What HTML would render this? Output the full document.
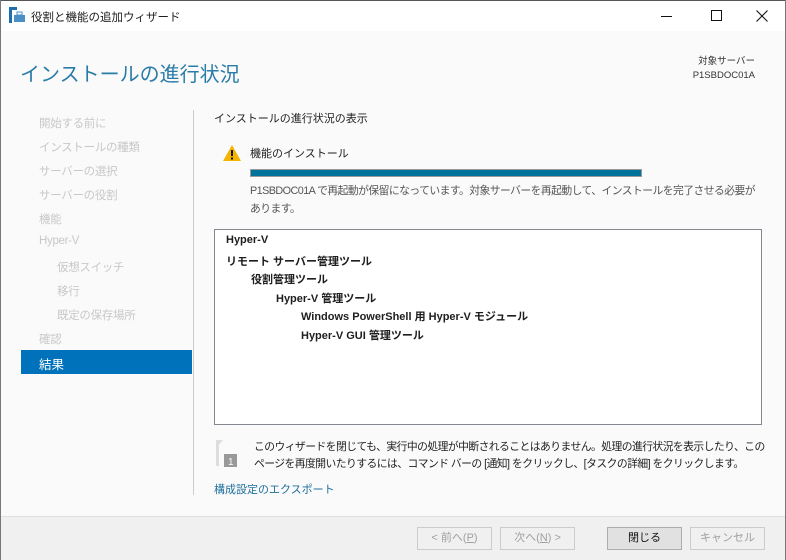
<!DOCTYPE html>
<html><head><meta charset="utf-8"><style>
*{margin:0;padding:0;box-sizing:border-box}
body{width:786px;height:560px;overflow:hidden;background:#fafafa;font-family:"Liberation Sans","Noto Sans CJK JP",sans-serif;font-size:11px;color:#1e1e1e;position:relative}
.a{position:absolute;white-space:nowrap}
.tb{position:absolute;left:0;top:0;width:786px;height:31px;background:#fff;border-top:1px solid #555}
.nav{color:#c8c8c8;font-size:11.5px;letter-spacing:-0.3px}
.btn{position:absolute;top:527px;height:23px;width:75px;border:1px solid #ccc;background:#f0f0f0;color:#a0a0a0;text-align:center;line-height:21px;font-size:11px}
.p{font-size:10.8px;letter-spacing:-0.55px}
</style></head><body>
<div class="tb">
<svg class="a" style="left:9px;top:6px" width="16" height="16"><rect x="0" y="0" width="3" height="16" fill="#1e6fae"/><rect x="3" y="0" width="5" height="3" fill="#1e6fae"/><rect x="5" y="8" width="11" height="7" fill="#4a90c8"/><rect x="8" y="5" width="5" height="3" fill="none" stroke="#4a90c8"/></svg>
<div class="a" style="left:31px;top:8px;font-size:11.5px">役割と機能の追加ウィザード</div>
<div class="a" style="left:661px;top:15px;width:11px;height:1px;background:#111"></div>
<div class="a" style="left:711px;top:9px;width:11px;height:11px;border:1px solid #111"></div>
<svg class="a" style="left:756px;top:9px" width="12" height="12"><path d="M0.5 0.5 L11.5 11.5 M11.5 0.5 L0.5 11.5" stroke="#111" stroke-width="1.1"/></svg>
</div>
<div class="a" style="left:0;top:0;width:1px;height:560px;background:#777"></div>
<div class="a" style="right:0;top:0;width:1px;height:560px;background:#777"></div>
<div class="a" style="left:20px;top:58px;font-size:20px;color:#2a7ca8">インストールの進行状況</div>
<div class="a" style="right:31px;top:55px;font-size:9.5px;text-align:right;color:#333;line-height:14px">対象サーバー<br>P1SBDOC01A</div>
<div class="a nav" style="left:39px;top:115px">開始する前に</div>
<div class="a nav" style="left:39px;top:139px">インストールの種類</div>
<div class="a nav" style="left:39px;top:163px">サーバーの選択</div>
<div class="a nav" style="left:39px;top:187px">サーバーの役割</div>
<div class="a nav" style="left:39px;top:211px">機能</div>
<div class="a nav" style="left:39px;top:235px">Hyper-V</div>
<div class="a nav" style="left:57px;top:259px">仮想スイッチ</div>
<div class="a nav" style="left:57px;top:283px">移行</div>
<div class="a nav" style="left:57px;top:307px">既定の保存場所</div>
<div class="a nav" style="left:39px;top:331px">確認</div>
<div class="a" style="left:21px;top:350px;width:171px;height:24px;background:#0072bc"></div>
<div class="a" style="left:39px;top:354px;font-size:12.5px;color:#fff">結果</div>
<div class="a" style="left:193px;top:110px;width:1px;height:385px;background:#ccc"></div>
<div class="a" style="left:214px;top:110px">インストールの進行状況の表示</div>
<svg class="a" style="left:222px;top:144px" width="20" height="18"><path d="M10 1 L19 17 L1 17 Z" fill="#f5b400"/><rect x="9" y="6" width="2" height="6" fill="#111"/><rect x="9" y="13.5" width="2" height="2" fill="#111"/></svg>
<div class="a" style="left:250px;top:145px">機能のインストール</div>
<div class="a" style="left:250px;top:169px;width:392px;height:8px;background:#00739c;border:1px solid #999"></div>
<div class="a p" style="left:250px;top:182px;color:#555;line-height:18px">P1SBDOC01A で再起動が保留になっています。対象サーバーを再起動して、インストールを完了させる必要が<br>あります。</div>
<div class="a" style="left:214px;top:229px;width:548px;height:196px;background:#fff;border:1px solid #828790"></div>
<div class="a" style="left:226px;top:234px;font-weight:bold">Hyper-V</div>
<div class="a" style="left:226px;top:253px;font-weight:bold">リモート サーバー管理ツール</div>
<div class="a" style="left:251px;top:271px;font-weight:bold">役割管理ツール</div>
<div class="a" style="left:276px;top:290px;font-weight:bold">Hyper-V 管理ツール</div>
<div class="a" style="left:301px;top:308px;font-weight:bold">Windows PowerShell 用 Hyper-V モジュール</div>
<div class="a" style="left:301px;top:327px;font-weight:bold">Hyper-V GUI 管理ツール</div>
<svg class="a" style="left:215px;top:440px" width="26" height="28"><path d="M1 0 L8 0 L1 8 Z" fill="#ddd"/><rect x="1" y="0" width="3" height="26" fill="#ddd"/><rect x="9" y="14" width="13" height="13" fill="#999"/><text x="13" y="25" font-size="10" fill="#fff" font-family="Liberation Sans">1</text></svg>
<div class="a p" style="left:254px;top:439px;line-height:17px">このウィザードを閉じても、実行中の処理が中断されることはありません。処理の進行状況を表示したり、この<br>ページを再度開いたりするには、コマンド バーの [通知] をクリックし、[タスクの詳細] をクリックします。</div>
<div class="a" style="left:214px;top:481px;color:#1e6f9c">構成設定のエクスポート</div>
<div class="a" style="left:1px;top:516px;width:784px;height:44px;background:#f0f0f0;border-top:1px solid #dfdfdf"></div>
<div class="btn" style="left:417px">&lt; 前へ(<u>P</u>)</div>
<div class="btn" style="left:500px">次へ(<u>N</u>) &gt;</div>
<div class="btn" style="left:607px;background:#e1e1e1;border-color:#adadad;color:#111">閉じる</div>
<div class="btn" style="left:690px">キャンセル</div>
</body></html>
